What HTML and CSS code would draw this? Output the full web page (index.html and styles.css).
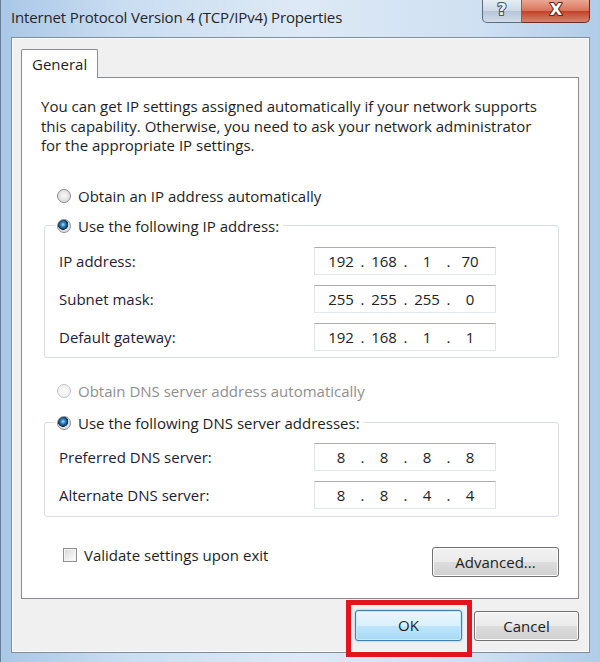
FILE: index.html
```html
<!DOCTYPE html>
<html lang="en">
<head>
  <meta charset="UTF-8" />
  <title>Internet Protocol Version 4 (TCP/IPv4) Properties</title>
  <link rel="stylesheet" href="styles.css">
</head>
<body>
  <div class="window">
    <div class="titlebar">
      <span class="title">Internet Protocol Version 4 (TCP/IPv4) Properties</span>
      <div class="caption-btns">
        <span class="cap-btn help">
          <svg width="16" height="18" viewBox="0 0 16 18"><text x="8" y="15" text-anchor="middle" class="glyph">?</text></svg>
        </span>
        <span class="cap-btn close">
          <svg width="18" height="18" viewBox="0 0 18 18"><text x="9" y="15" text-anchor="middle" class="glyph">X</text></svg>
        </span>
      </div>
    </div>

    <div class="client">
      <div class="tabs"><span class="tab">General</span></div>

      <div class="panel">
        <p class="intro">You can get IP settings assigned automatically if your network supports<br>this capability. Otherwise, you need to ask your network administrator<br>for the appropriate IP settings.</p>

        <div class="option first"><span class="radio"></span>Obtain an IP address automatically</div>

        <fieldset class="group ip-group">
          <legend><span class="option"><span class="radio checked"></span>Use the following IP address:</span></legend>
          <div class="field">
            <span class="label">IP address:</span>
            <span class="ipbox"><span>192</span><i>.</i><span>168</span><i>.</i><span>1</span><i>.</i><span>70</span></span>
          </div>
          <div class="field">
            <span class="label">Subnet mask:</span>
            <span class="ipbox"><span>255</span><i>.</i><span>255</span><i>.</i><span>255</span><i>.</i><span>0</span></span>
          </div>
          <div class="field">
            <span class="label">Default gateway:</span>
            <span class="ipbox"><span>192</span><i>.</i><span>168</span><i>.</i><span>1</span><i>.</i><span>1</span></span>
          </div>
        </fieldset>

        <div class="option disabled dns-auto"><span class="radio"></span>Obtain DNS server address automatically</div>

        <fieldset class="group dns-group">
          <legend><span class="option"><span class="radio checked"></span>Use the following DNS server addresses:</span></legend>
          <div class="field">
            <span class="label">Preferred DNS server:</span>
            <span class="ipbox"><span>8</span><i>.</i><span>8</span><i>.</i><span>8</span><i>.</i><span>8</span></span>
          </div>
          <div class="field">
            <span class="label">Alternate DNS server:</span>
            <span class="ipbox"><span>8</span><i>.</i><span>8</span><i>.</i><span>4</span><i>.</i><span>4</span></span>
          </div>
        </fieldset>

        <div class="bottom-row">
          <div class="check"><span class="checkbox"></span>Validate settings upon exit</div>
          <span class="button advanced">Advanced...</span>
        </div>
      </div>

      <div class="footer">
        <span class="ok-wrap">
          <span class="button default">OK</span>
          <span class="marker"></span>
        </span>
        <span class="button">Cancel</span>
      </div>
    </div>
  </div>
</body>
</html>
```

FILE: styles.css
```css
* {
  margin: 0;
  padding: 0;
  box-sizing: border-box;
}

body {
  width: 600px;
  height: 662px;
  overflow: hidden;
  font-family: "Open Sans", "Noto Sans", sans-serif;
  font-size: 15px;
  color: #1e1e1e;
}

.window {
  height: 662px;
  padding: 0 10px;
  background: linear-gradient(90deg, #a9c7e6 0%, #c9ddf1 20%, #dde9f6 50%, #cfe0f2 80%, #b0cce9 100%);
  border-left: 1px solid #6a7f96;
}

.titlebar {
  height: 37px;
  display: flex;
  justify-content: space-between;
  align-items: flex-start;
  margin-left: -1px;
}

.title {
  padding: 6px 0 0 1px;
  line-height: 22px;
  font-size: 15px;
  letter-spacing: -0.15px;
  color: #262626;
}

.caption-btns {
  display: flex;
  height: 23px;
}

.cap-btn {
  display: flex;
  justify-content: center;
  height: 23px;
  border: 1px solid #5d6d80;
  border-top: none;
}

.cap-btn svg {
  display: block;
}

.glyph {
  font-family: "DejaVu Sans", sans-serif;
  font-weight: bold;
  font-size: 16px;
  fill: #fff;
  stroke-width: 2.2px;
  stroke-linejoin: round;
  paint-order: stroke;
}

.help {
  width: 40px;
  border-radius: 0 0 0 5px;
  background: linear-gradient(#e6edf5 0%, #cdd9e6 50%, #b6c5d8 52%, #d2dde9 100%);
}

.help .glyph {
  fill: #eef2f6;
  stroke: #4b5663;
}

.close {
  width: 68px;
  border-left: none;
  border-color: #6e2a22;
  border-radius: 0 0 5px 0;
  background: linear-gradient(#eaa793 0%, #d8725a 50%, #c3432a 52%, #d7826c 100%);
}

.close .glyph {
  stroke: #6a2015;
}

.client {
  height: 616px;
  padding: 11px 10px 11px 9px;
  background: #f0f0f0;
  border: 1px solid #7f8d9c;
  box-shadow: inset 0 0 0 1px #fafafa;
}

.tabs {
  display: flex;
}

.tab {
  position: relative;
  z-index: 1;
  width: 77px;
  height: 29px;
  margin-bottom: -1px;
  padding: 3px 0 0 10px;
  line-height: 22px;
  background: #fff;
  border: 1px solid #898c95;
  border-bottom: none;
  border-radius: 2px 2px 0 0;
}

.panel {
  padding: 19px 19px 21px 19px;
  background: #fff;
  border: 1px solid #898c95;
}

.intro {
  line-height: 19.5px;
}

.option {
  display: flex;
  align-items: center;
  gap: 7px;
  height: 20px;
  line-height: 20px;
  white-space: nowrap;
}

.option.first {
  margin-top: 30px;
  padding-left: 16px;
}

.option.dns-auto {
  margin-top: 23px;
  padding-left: 16px;
}

.option.disabled {
  color: #8f8f8f;
}

.radio {
  flex: none;
  width: 14px;
  height: 14px;
  border-radius: 50%;
  border: 1px solid #8a8c8e;
  background: radial-gradient(circle at 50% 45%, #f8f8f8 0%, #e8e8e8 45%, #c9caca 100%);
}

.radio.checked {
  background:
    radial-gradient(circle at 42% 38%, #a7e0fb 0px, #3b8fc8 2px, #154b78 4px, #0c2a45 5px, transparent 5.5px),
    radial-gradient(circle, #f2f2f2 0%, #d6d6d6 100%);
}

.disabled .radio {
  border-color: #c4c4c4;
  background: radial-gradient(circle, #fbfbfb 0%, #ececec 100%);
}

.group {
  margin-left: 3px;
  padding: 11px 10px 6px 10px;
  border: 1px solid #d5dfe5;
  border-radius: 3px;
}

.ip-group {
  margin-top: 10px;
}

.dns-group {
  margin-top: 12px;
  padding-top: 10px;
  padding-bottom: 7px;
}

.group legend {
  padding: 0 4px 0 2px;
}

.field {
  display: flex;
  align-items: center;
  height: 28px;
  padding-left: 4px;
  color: #1f2035;
}

.field + .field {
  margin-top: 10px;
}

.label {
  width: 255px;
}

.ipbox {
  display: grid;
  grid-template-columns: 30px 13px 30px 13px 30px 13px 30px;
  align-items: center;
  width: 182px;
  height: 28px;
  padding-left: 11px;
  background: #fff;
  border: 1px solid #e2e3ea;
  border-top-color: #abadb3;
  border-bottom-color: #e3e9ef;
  color: #222;
}

.ipbox span,
.ipbox i {
  text-align: center;
  font-style: normal;
}

.bottom-row {
  display: flex;
  justify-content: space-between;
  align-items: flex-start;
  margin-top: 28px;
}

.check {
  display: flex;
  align-items: center;
  gap: 7px;
  height: 20px;
  padding-left: 22px;
}

.checkbox {
  width: 14px;
  height: 14px;
  border: 1px solid #8e8f8f;
  background: linear-gradient(135deg, #d6d6d6 0%, #f0f0f0 60%, #ffffff 100%);
  box-shadow: inset 0 0 0 1px #f4f4f4;
}

.button {
  display: flex;
  align-items: center;
  justify-content: center;
  height: 30px;
  border: 1px solid #707070;
  border-radius: 3px;
  background: linear-gradient(#f2f2f2 0%, #ebebeb 50%, #dddddd 51%, #cfcfcf 100%);
  box-shadow: inset 0 0 0 1px #fbfbfb;
  color: #1e1e1e;
}

.advanced {
  width: 127px;
  margin-top: 2px;
}

.footer {
  display: flex;
  justify-content: flex-end;
  align-items: flex-start;
  gap: 12px;
  margin-top: 11px;
}

.footer .button {
  width: 105px;
}

.footer > .button {
  margin-top: 1px;
}

.ok-wrap {
  position: relative;
}

.footer .default {
  width: 107px;
  height: 31px;
  border-color: #3c7fb1;
  background: linear-gradient(#eaf6fd 0%, #d9f0fc 50%, #bee6fd 51%, #a7d9f5 100%);
  box-shadow: inset 0 0 0 1px #c5ecfb, 0 0 2px #5fb6e6;
}

.marker {
  position: absolute;
  top: -10px;
  bottom: -16px;
  left: -9px;
  right: -10px;
  border: 5px solid #e3141d;
}
```
